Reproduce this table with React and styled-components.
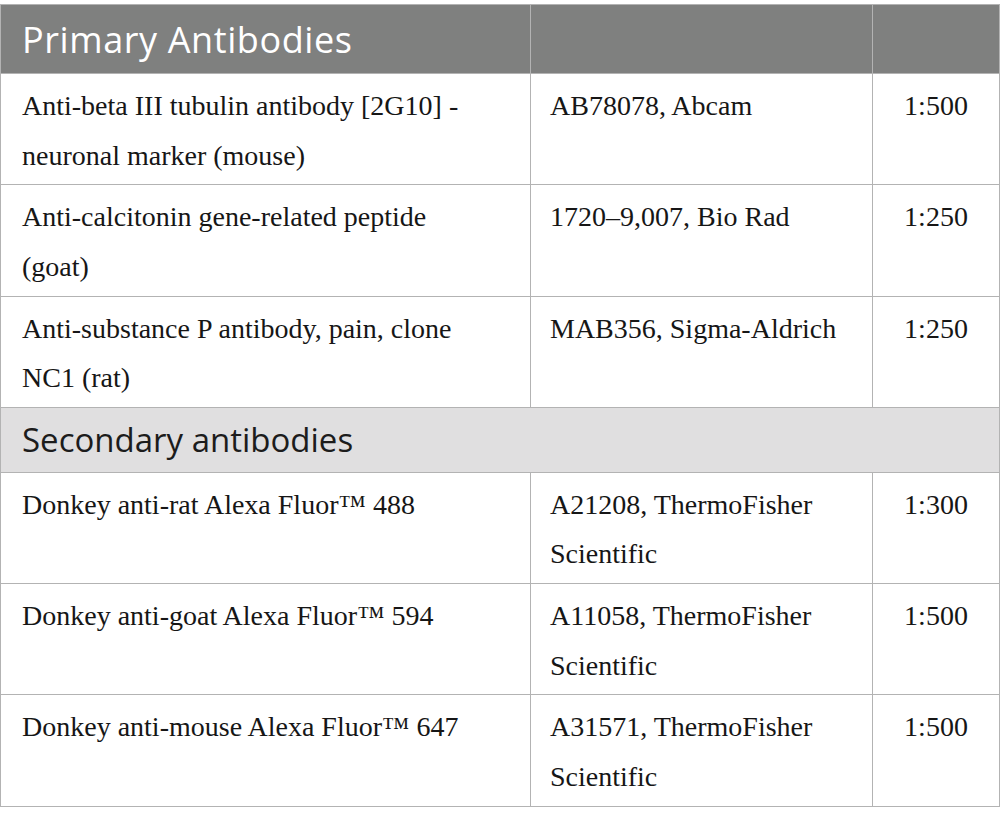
import React from "react";
import styled, { createGlobalStyle } from "styled-components";

const Global = createGlobalStyle`
  html, body { margin: 0; padding: 0; background: #fff; }
`;

const Page = styled.div`
  padding-top: 4px;
  width: 999px;
`;

const Table = styled.table`
  width: 999px;
  border-collapse: collapse;
  table-layout: fixed;
  font-family: "Liberation Serif", "Times New Roman", serif;
  color: #161616;
`;

const HeadCell = styled.th`
  background: ${(p) => (p.$light ? "#e0dfe0" : "#7f807f")};
  color: ${(p) => (p.$light ? "#1c1c1c" : "#ffffff")};
  font-family: "Open Sans", "Noto Sans", sans-serif;
  font-weight: 400;
  font-size: ${(p) => (p.$light ? "33px" : "36px")};
  letter-spacing: ${(p) => (p.$light ? "0" : "0.6px")};
  line-height: 45px;
  text-align: left;
  padding: ${(p) => (p.$light ? "9px 21px 10px" : "12px 21px 11px")};
  border: 1px solid #b3b3b3;
  white-space: nowrap;
`;

const Cell = styled.td`
  font-size: 28px;
  line-height: 49.5px;
  padding-top: 7px;
  padding-bottom: 4px;
  vertical-align: top;
  text-align: ${(p) => (p.$center ? "center" : "left")};
  border: 1px solid #b3b3b3;
  padding-left: ${(p) => (p.$center ? "20px" : p.$mid ? "19px" : "21px")};
  padding-right: ${(p) => (p.$center ? "20px" : p.$mid ? "10px" : "40px")};
`;

const Row = styled.tr`
  height: 111.3px;
`;

const sections = [
  {
    title: "Primary Antibodies",
    dark: true,
    rows: [
      ["Anti-beta III tubulin antibody [2G10] - neuronal marker (mouse)", "AB78078, Abcam", "1:500"],
      ["Anti-calcitonin gene-related peptide (goat)", "1720\u20139,007, Bio Rad", "1:250"],
      ["Anti-substance P antibody, pain, clone NC1 (rat)", "MAB356, Sigma-Aldrich", "1:250"],
    ],
  },
  {
    title: "Secondary antibodies",
    dark: false,
    rows: [
      ["Donkey anti-rat Alexa Fluor\u2122 488", "A21208, ThermoFisher Scientific", "1:300"],
      ["Donkey anti-goat Alexa Fluor\u2122 594", "A11058, ThermoFisher Scientific", "1:500"],
      ["Donkey anti-mouse Alexa Fluor\u2122 647", "A31571, ThermoFisher Scientific", "1:500"],
    ],
  },
];

export default function App() {
  return (
    <Page>
      <Global />
      <Table>
        <colgroup>
          <col style={{ width: 530 }} />
          <col style={{ width: 342 }} />
          <col style={{ width: 127 }} />
        </colgroup>
        <tbody>
          {sections.map((s) => (
            <React.Fragment key={s.title}>
              {s.dark ? (
                <tr>
                  <HeadCell>{s.title}</HeadCell>
                  <HeadCell />
                  <HeadCell />
                </tr>
              ) : (
                <tr>
                  <HeadCell $light colSpan={3}>{s.title}</HeadCell>
                </tr>
              )}
              {s.rows.map((r) => (
                <Row key={r[0]}>
                  <Cell>{r[0]}</Cell>
                  <Cell $mid>{r[1]}</Cell>
                  <Cell $center>{r[2]}</Cell>
                </Row>
              ))}
            </React.Fragment>
          ))}
        </tbody>
      </Table>
    </Page>
  );
}
